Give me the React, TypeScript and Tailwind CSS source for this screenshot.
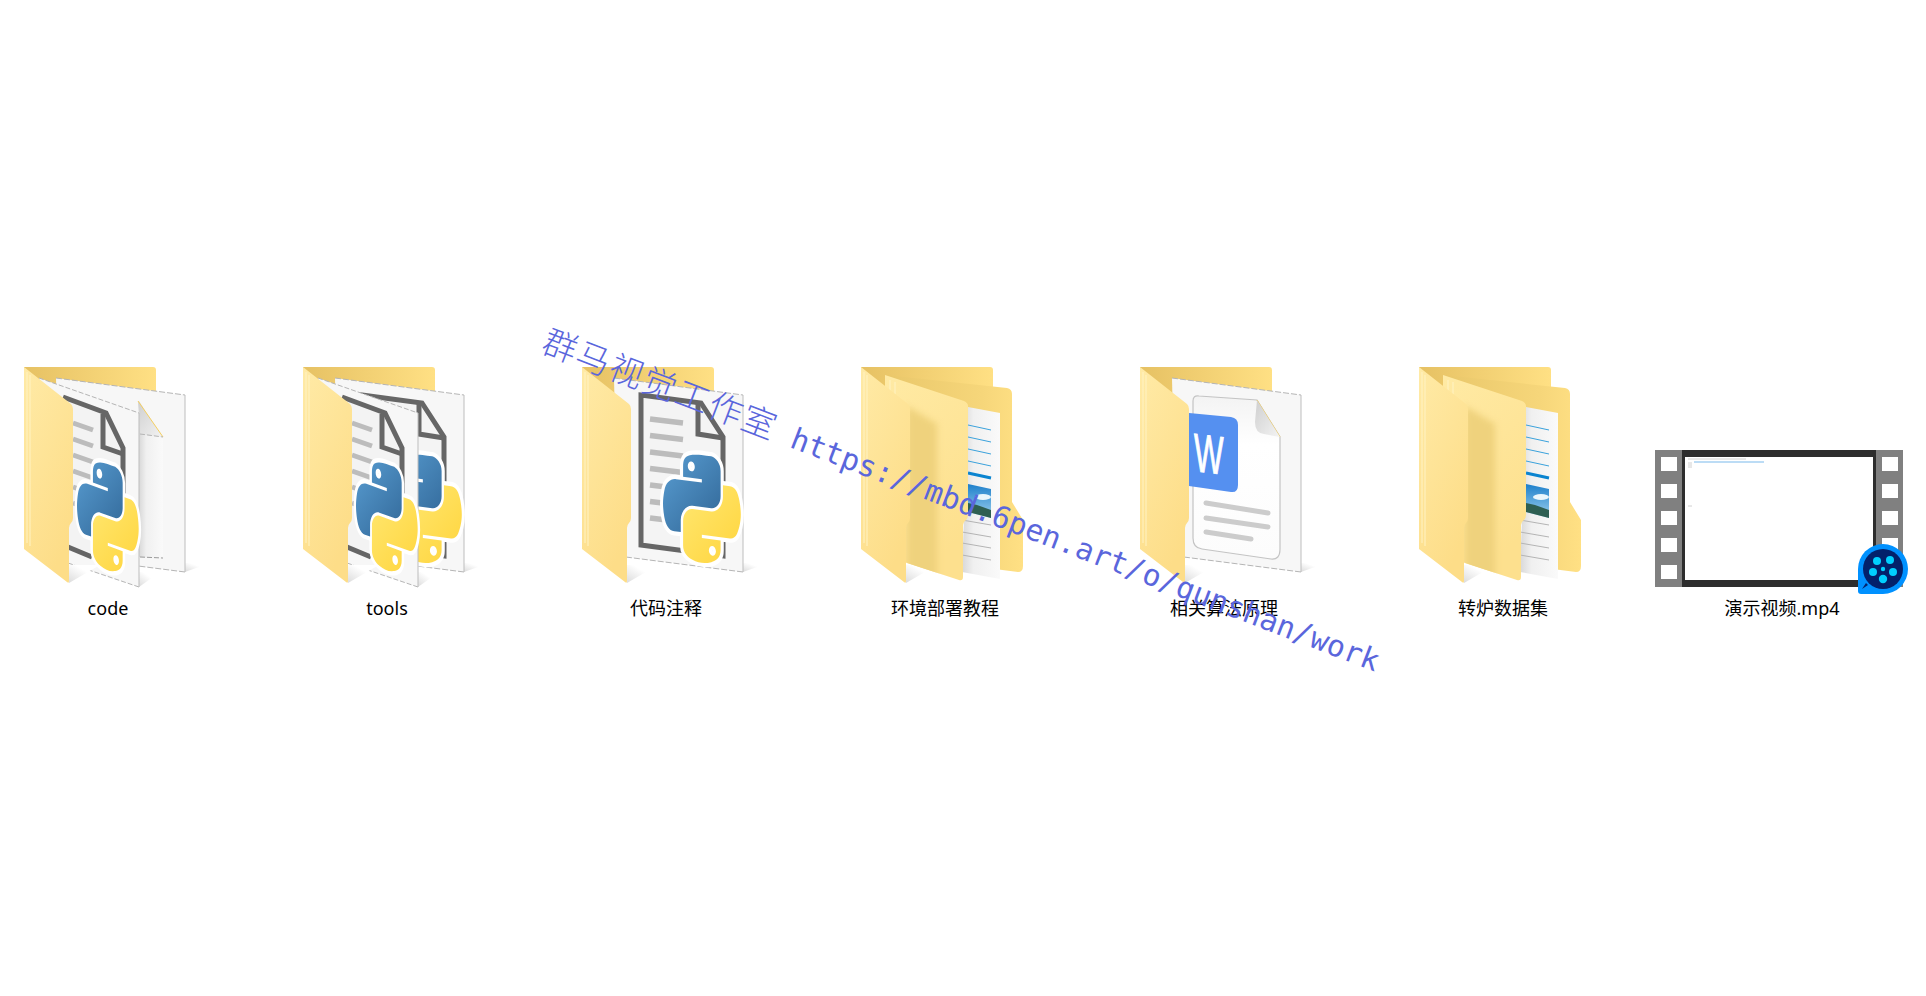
import React from 'react';

const BLUE_SNAKE =
  'M54.92 0C50.34.02 45.96.41 42.11 1.09 30.76 3.1 28.7 7.29 28.7 15.03v10.22h26.81v3.41H18.64c-7.79 0-14.62 4.68-16.75 13.59-2.46 10.21-2.57 16.59 0 27.25 1.9 7.94 6.46 13.59 14.25 13.59h9.22v-12.25c0-8.85 7.66-16.65 16.75-16.65h26.78c7.46 0 13.41-6.14 13.41-13.63V14.03c0-7.27-6.13-12.73-13.41-13.94C64.28.33 59.5-.02 54.92 0zM40.42 8.22c2.77 0 5.03 2.3 5.03 5.12 0 2.82-2.26 5.1-5.03 5.1-2.78 0-5.03-2.28-5.03-5.1 0-2.82 2.25-5.12 5.03-5.12z';
const YELLOW_SNAKE =
  'M85.64 28.66v11.9c0 9.24-7.83 17-16.75 17H42.11c-7.34 0-13.41 6.28-13.41 13.63v25.53c0 7.27 6.32 11.54 13.41 13.63 8.48 2.49 16.62 2.94 26.78 0 6.75-1.96 13.4-5.89 13.4-13.63V86.5H55.51v-3.4h40.19c7.79 0 10.7-5.44 13.4-13.6 2.8-8.4 2.69-16.48 0-27.25-1.92-7.76-5.6-13.59-13.4-13.59zM70.57 93.31c2.78 0 5.04 2.28 5.04 5.1 0 2.82-2.26 5.12-5.04 5.12-2.77 0-5.03-2.3-5.03-5.12 0-2.82 2.26-5.1 5.03-5.1z';

const MID_PANEL =
  'M48 15L127 41Q131 43 131 46V155Q131 158 129 160Q126 162 126 165V217Q126 221 122 220L70 203L48 190Z';

function Defs() {
  return (
    <defs>
      <linearGradient id="tab" x1="0" y1="0" x2="1" y2="0">
        <stop offset="0" stopColor="#e6c163" />
        <stop offset="1" stopColor="#ffe084" />
      </linearGradient>
      <linearGradient id="panel" x1="0" y1="0" x2="0.5" y2="1">
        <stop offset="0" stopColor="#ffeaa6" />
        <stop offset="1" stopColor="#fddd88" />
      </linearGradient>
      <linearGradient id="midPanel" x1="0" y1="0" x2="0.4" y2="1">
        <stop offset="0" stopColor="#ffeaa4" />
        <stop offset="1" stopColor="#fde08e" />
      </linearGradient>
      <linearGradient id="backPanel" x1="0" y1="0" x2="1" y2="0">
        <stop offset="0" stopColor="#e9c76a" />
        <stop offset="0.7" stopColor="#f6d67a" />
        <stop offset="1" stopColor="#ffe084" />
      </linearGradient>
      <linearGradient id="page" x1="0" y1="0" x2="1" y2="0">
        <stop offset="0" stopColor="#d8d8d8" />
        <stop offset="0.3" stopColor="#f0f0f0" />
        <stop offset="1" stopColor="#fafafa" />
      </linearGradient>
      <linearGradient id="docFill" x1="0" y1="0" x2="0" y2="1">
        <stop offset="0" stopColor="#f3f3f3" />
        <stop offset="0.3" stopColor="#ffffff" />
        <stop offset="1" stopColor="#fcfcfc" />
      </linearGradient>
      <linearGradient id="fold" x1="0" y1="0" x2="1" y2="1">
        <stop offset="0" stopColor="#cfcfcf" />
        <stop offset="1" stopColor="#f3f3f3" />
      </linearGradient>
      <linearGradient id="shadow" x1="0" y1="1" x2="0.6" y2="0.4">
        <stop offset="0" stopColor="#dcdcdc" />
        <stop offset="1" stopColor="#ffffff" />
      </linearGradient>
      <linearGradient id="snakeBlue" x1="0" y1="0" x2="1" y2="1">
        <stop offset="0" stopColor="#5a9fd4" />
        <stop offset="1" stopColor="#2f6494" />
      </linearGradient>
      <linearGradient id="snakeYellow" x1="0" y1="0" x2="1" y2="1">
        <stop offset="0" stopColor="#ffe873" />
        <stop offset="1" stopColor="#ffd43b" />
      </linearGradient>
      <linearGradient id="sky" x1="0" y1="0" x2="0" y2="1">
        <stop offset="0" stopColor="#1d7fcb" />
        <stop offset="1" stopColor="#9fd2ee" />
      </linearGradient>
      <clipPath id="midClip">
        <path d={MID_PANEL} />
      </clipPath>
    </defs>
  );
}

function PythonLogo({ matrix }: { matrix: string }) {
  return (
    <g transform={`matrix(${matrix})`}>
      <path d={BLUE_SNAKE} fill="#fff" stroke="#fff" strokeWidth="9" strokeLinejoin="round" />
      <path d={YELLOW_SNAKE} fill="#fff" stroke="#fff" strokeWidth="9" strokeLinejoin="round" />
      <path d={BLUE_SNAKE} fill="url(#snakeBlue)" fillRule="evenodd" />
      <path d={YELLOW_SNAKE} fill="url(#snakeYellow)" fillRule="evenodd" />
    </g>
  );
}

function BackTab() {
  return <path d="M24 7H153Q156 7 156 10V40H24Z" fill="url(#tab)" />;
}

function FrontShadow() {
  return <path d="M69 223L100 205H69Z" fill="url(#shadow)" />;
}

function FrontPanel() {
  return (
    <g>
      <path
        d="M24 7L71 44Q73 46 73 49V158Q73 161 71 163Q69 165 69 168V221Q69 224 67 222L24 189Z"
        fill="url(#panel)"
      />
      <path d="M27 12V183M30 15V186" stroke="#fff3c4" strokeWidth="1" fill="none" />
    </g>
  );
}

function BackSheet() {
  return (
    <g>
      <path d="M185 212L210 203H185Z" fill="url(#shadow)" />
      <path d="M56 18L185 35V212L60 196Z" fill="#f7f7f7" />
      <path d="M56 18L185 35" stroke="#b5b5b5" strokeWidth="1" strokeDasharray="6 2" fill="none" />
      <path d="M60 196L185 212" stroke="#b5b5b5" strokeWidth="1" strokeDasharray="6 2" fill="none" />
      <path d="M185 35V212" stroke="#bdbdbd" strokeWidth="1" fill="none" />
    </g>
  );
}

// big page with the python logo, sits on the back sheet
function PythonDoc() {
  const rows = [0, 1, 2, 3, 4, 5, 6];
  return (
    <g>
      <path d="M83 35L143 43L165 77V196L83 185Z" fill="#f4f4f4" stroke="#666" strokeWidth="5" />
      <path d="M140 43V74L165 78" fill="none" stroke="#666" strokeWidth="5" />
      {rows.map((i) => (
        <path
          key={i}
          d={`M92 ${59 + i * 16.5}L125 ${63 + i * 16.5}`}
          stroke="#bcbcbc"
          strokeWidth="5.5"
        />
      ))}
      <PythonLogo matrix=".7,.09,0,.96,105,90" />
    </g>
  );
}

function FrontSheet() {
  const rows = [0, 1, 2, 3, 4, 5];
  return (
    <g>
      <path d="M139 227L160 212H139Z" fill="url(#shadow)" />
      <path d="M39 18L139 53V227L68 203Z" fill="#f7f7f7" />
      <path d="M39 18L139 53" stroke="#b5b5b5" strokeWidth="1" strokeDasharray="5 2" fill="none" />
      <path d="M68 203L139 227" stroke="#b5b5b5" strokeWidth="1" strokeDasharray="5 2" fill="none" />
      <path d="M139 53V227" stroke="#bdbdbd" strokeWidth="1" fill="none" />
      <path d="M63 37L106 53L123 88V200L68 186Z" fill="#f3f3f3" stroke="none" />
      <path d="M63 37L106 53L123 88V140" fill="none" stroke="#666" strokeWidth="5" />
      <path d="M103 54V87L123 94" fill="none" stroke="#666" strokeWidth="5" />
      <path d="M68 187L92 197" fill="none" stroke="#666" strokeWidth="5" />
      {rows.map((i) => (
        <path key={i} d={`M73 ${63 + i * 16}L93 ${70 + i * 16}`} stroke="#bcbcbc" strokeWidth="5" />
      ))}
      <PythonLogo matrix=".555,.2,0,.945,77,93" />
    </g>
  );
}

function CodeFolder() {
  return (
    <svg width="216" height="228" className="overflow-visible">
      <Defs />
      <BackTab />
      <BackSheet />
      <path d="M139 41L163 77V198L139 197Z" fill="url(#page)" />
      <path d="M138 41L163 77L140 74Z" fill="url(#fold)" />
      <path d="M138 41L163 77" stroke="#f5cf5f" strokeWidth="1" fill="none" />
      <path d="M140 74L163 77" stroke="#b5b5b5" strokeWidth="1" strokeDasharray="5 2" fill="none" />
      <path d="M140 197L163 198" stroke="#9a9a9a" strokeWidth="1" strokeDasharray="5 2" fill="none" />
      <FrontSheet />
      <FrontShadow />
      <FrontPanel />
    </svg>
  );
}

function ToolsFolder() {
  return (
    <svg width="216" height="228" className="overflow-visible">
      <Defs />
      <BackTab />
      <BackSheet />
      <PythonDoc />
      <FrontSheet />
      <FrontShadow />
      <FrontPanel />
    </svg>
  );
}

function NotesFolder() {
  return (
    <svg width="216" height="228" className="overflow-visible">
      <Defs />
      <BackTab />
      <BackSheet />
      <PythonDoc />
      <FrontShadow />
      <FrontPanel />
    </svg>
  );
}

function ImageFolder() {
  const blue = [65, 77, 89, 101];
  const gray = [160, 172, 183, 195];
  return (
    <svg width="216" height="228" className="overflow-visible">
      <Defs />
      <BackTab />
      <path
        d="M48 15L170 28Q175 29 175 34V142L186 160V206Q186 212 181 212L150 208V120L48 100Z"
        fill="url(#backPanel)"
      />
      <path d="M131 47L163 53V219L125 212Z" fill="url(#page)" />
      {blue.map((y) => (
        <path key={y} d={`M131 ${y}L154 ${y + 5}`} stroke="#3ba2dc" strokeWidth="1" />
      ))}
      <path d="M131 113L154 118" stroke="#0a84d0" strokeWidth="3" />
      <path d="M131 124L154 129V158L131 152Z" fill="url(#sky)" />
      <ellipse cx="146" cy="137" rx="8" ry="3" fill="#eaf6fc" />
      <path d="M131 143L140 145L154 150V158L131 152Z" fill="#2e5f52" />
      {gray.map((y) => (
        <path key={y} d={`M125 ${y}L154 ${y + 5}`} stroke="#b4b4b4" strokeWidth="1" />
      ))}
      <FrontShadow />
      <path d={MID_PANEL} fill="url(#midPanel)" />
      <g clipPath="url(#midClip)">
        <path d="M70 46L100 64V230H70Z" fill="#efd27d" className="blur-[3px]" />
      </g>
      <path d="M53 20V33M58 22V34" stroke="#fff3c4" strokeWidth="1" fill="none" />
      <FrontPanel />
    </svg>
  );
}

function WordFolder() {
  return (
    <svg width="216" height="228" className="overflow-visible">
      <Defs />
      <BackTab />
      <BackSheet />
      <path
        d="M77 41Q77 35 83 36L141 40L164 77V189Q164 200 155 199L86 189Q77 188 77 178Z"
        fill="url(#docFill)"
        stroke="#c4c4c4"
        strokeWidth="1.2"
      />
      <path d="M141 40L164 77" stroke="#f5cf5f" strokeWidth="1" fill="none" />
      <path d="M141 40L139 62Q139 73 148 74L164 77Z" fill="url(#fold)" />
      <path
        d="M73 53L115 57Q122 58 122 65V125Q122 133 115 132L73 126Z"
        fill="#5590f0"
      />
      <text
        transform="matrix(.58,.07,0,1,78,111)"
        fontFamily='"Liberation Sans", sans-serif'
        fontSize="54"
        fill="#fff"
        stroke="#fff"
        strokeWidth="1"
      >
        W
      </text>
      <path d="M90 143L152 153M90 158L152 167M90 172L135 179" stroke="#cccccc" strokeWidth="5" strokeLinecap="round" fill="none" />
      <FrontShadow />
      <FrontPanel />
    </svg>
  );
}

function VideoThumb() {
  const holes = [97, 124, 151, 178, 205];
  return (
    <svg width="216" height="228" className="overflow-visible">
      <rect x="-19" y="90" width="248" height="137" fill="#808080" />
      <rect x="8" y="90" width="194" height="137" fill="#2d2d2d" />
      <rect x="11" y="97" width="188" height="123" fill="#fff" />
      {holes.map((y) => (
        <g key={y}>
          <rect x="-13" y={y} width="16" height="14" fill="#fff" />
          <rect x="208" y={y} width="16" height="14" fill="#fff" />
        </g>
      ))}
      <rect x="20" y="101" width="70" height="2" fill="#bcdcf5" />
      <path d="M14 99H72M14 103H18M14 105H18M14 107H18M14 146H18" stroke="#d0d0d0" strokeWidth="1" fill="none" />
      <path
        d="M184 231V209A25 25 0 1 1 209 234H187Q184 234 184 231Z"
        fill="#0091ff"
      />
      <path d="M188 229L194 225L192 223Z" fill="#03216b" />
      <circle cx="209" cy="209" r="20" fill="#03216b" />
      <circle cx="209" cy="209" r="2.2" fill="#00cfff" />
      <circle cx="203" cy="201" r="4" fill="#00cfff" />
      <circle cx="216" cy="200" r="4" fill="#00cfff" />
      <circle cx="199" cy="212" r="4" fill="#00cfff" />
      <circle cx="219" cy="212" r="4" fill="#00cfff" />
      <circle cx="209" cy="219" r="4.2" fill="#00cfff" />
    </svg>
  );
}

const items: { label: string; icon: React.ReactNode }[] = [
  { label: 'code', icon: <CodeFolder /> },
  { label: 'tools', icon: <ToolsFolder /> },
  { label: '代码注释', icon: <NotesFolder /> },
  { label: '环境部署教程', icon: <ImageFolder /> },
  { label: '相关算法原理', icon: <WordFolder /> },
  { label: '转炉数据集', icon: <ImageFolder /> },
  { label: '演示视频.mp4', icon: <VideoThumb /> },
];

export default function App() {
  return (
    <div className="relative h-[996px] w-full overflow-hidden bg-white font-['Noto_Sans','Noto_Sans_CJK_SC',sans-serif]">
      <div className="flex gap-[63px] pt-[360px]">
        {items.map((item) => (
          <div key={item.label} className="flex w-[216px] flex-col items-center">
            {item.icon}
            <span className="mt-[8px] text-[18px] leading-6 text-black">{item.label}</span>
          </div>
        ))}
      </div>

      {/* watermark */}
      <div className="pointer-events-none absolute left-[544px] top-[315px] origin-left rotate-[21deg] whitespace-nowrap font-['DejaVu_Sans_Mono','Noto_Sans_CJK_SC',monospace] text-[#5a66dc]">
        <span className="text-[34px] font-light tracking-[1.5px]">群马视觉工作室</span>
        <span className="text-[29.8px] font-light"> https://mbd.6pen.art/o/qunshan/work</span>
      </div>
    </div>
  );
}
